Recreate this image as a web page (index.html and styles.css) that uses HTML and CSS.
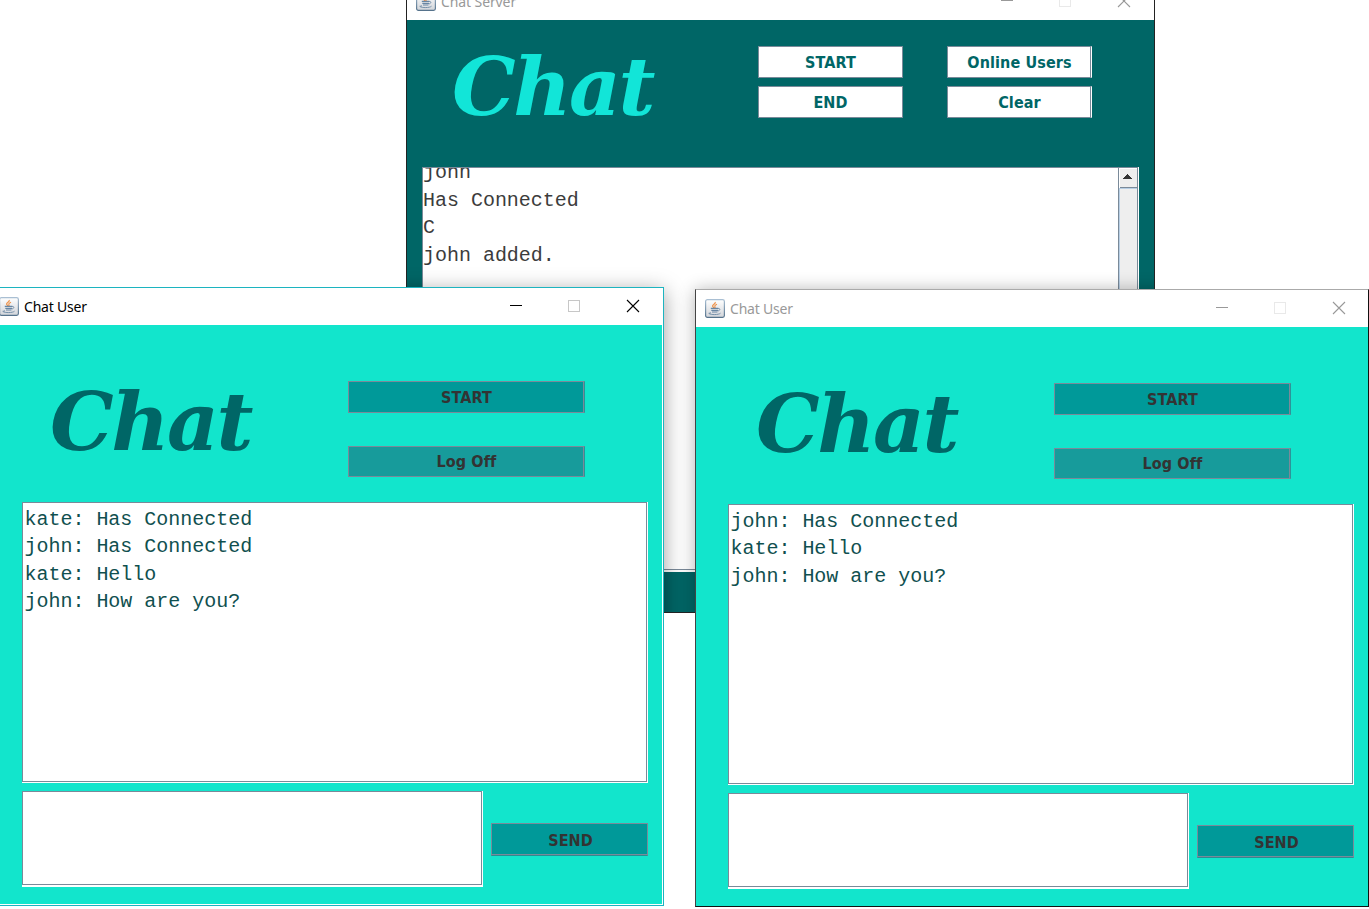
FILE: index.html
```
<!DOCTYPE html>
<html lang="en">
<head>
<meta charset="utf-8">
<title>Chat</title>
<link rel="stylesheet" href="styles.css">
</head>
<body>
<svg width="0" height="0" class="defs">
  <defs>
    <linearGradient id="tile" x1="0" y1="0" x2="0" y2="1"><stop offset="0" stop-color="#fff"/><stop offset="1" stop-color="#d2d5da"/></linearGradient>
    <linearGradient id="edge" x1="0" y1="0" x2="0" y2="1"><stop offset="0" stop-color="#a9bfd3"/><stop offset="1" stop-color="#56738c"/></linearGradient>
    <symbol id="java" viewBox="0 0 20 19">
      <rect x=".6" y=".6" width="18.8" height="17.8" rx="1.8" fill="url(#tile)" stroke="url(#edge)" stroke-width="1.2"/>
      <path d="M10.2 3c1 1.6-2.900 2.500-2.600 4.100.1.700.9 1.100 1.300 1.900M12 5.200c-1.600.7-2.500 1.300-2.100 2.300.3.700.5 1-.2 1.700" fill="none" stroke="#ee9148" stroke-width="1.200"/>
      <path d="M5.800 9.400h7.600M6.300 11.300h6.700M7 13h5.400" fill="none" stroke="#6886a3" stroke-width="1.200"/>
      <path d="M13.200 9.500c2.400-.4 2.200 2.200-.6 2.500M3.800 14.400c2 1.700 10 1.500 11.700-.2M6 13.800l-2.200.6" fill="none" stroke="#7691aa" stroke-width="1"/>
    </symbol>
    <symbol id="controls" viewBox="0 0 131 14">
      <path d="M1 6.500h12" stroke="currentColor"/>
      <rect x="59.500" y="1.500" width="11" height="11" fill="none" stroke="currentColor" opacity=".22"/>
      <path d="M118 1l12 12M130 1l-12 12" stroke="currentColor" stroke-width="1.100"/>
    </symbol>
  </defs>
</svg>

<main class="desktop">
  <section class="window server">
    <header class="titlebar">
      <svg class="java"><use href="#java"/></svg><span class="caption">Chat Server</span>
      <svg class="controls"><use href="#controls"/></svg>
    </header>
    <div class="server-body">
      <div class="server-top">
        <h1 class="logo">Chat</h1>
        <div class="server-buttons">
          <button class="btn light">START</button><button class="btn light edge">Online Users</button>
          <button class="btn light">END</button><button class="btn light edge">Clear</button>
        </div>
      </div>
      <div class="pane server-log">
        <div class="pane-inner">
          <div class="lines"><p>john</p><p>Has Connected</p><p>C</p><p>john added.</p></div>
          <div class="scrollbar"><div class="arrow"><svg width="9" height="5" shape-rendering="crispEdges"><path d="M4 0h1v1h1v1h1v1h1v1h1v1H0V4h1V3h1V2h1V1h1z" fill="#333"/></svg></div></div>
        </div>
      </div>
    </div>
    <div class="shade shade-left"></div>
    <div class="shade shade-right"></div>
  </section>

  <section class="window user active">
    <header class="titlebar">
      <svg class="java"><use href="#java"/></svg><span class="caption">Chat User</span>
      <svg class="controls"><use href="#controls"/></svg>
    </header>
    <div class="user-body">
      <div class="user-top">
        <h1 class="logo">Chat</h1>
        <div class="user-buttons"><button class="btn teal">START</button><button class="btn teal logoff">Log Off</button></div>
      </div>
      <div class="pane log"><div class="pane-inner"><div class="lines"><p>kate: Has Connected</p><p>john: Has Connected</p><p>kate: Hello</p><p>john: How are you?</p></div></div></div>
      <div class="compose"><div class="pane input"><div class="pane-inner"></div></div><button class="btn send">SEND</button></div>
    </div>
  </section>

  <section class="window user inactive">
    <header class="titlebar">
      <svg class="java"><use href="#java"/></svg><span class="caption">Chat User</span>
      <svg class="controls"><use href="#controls"/></svg>
    </header>
    <div class="user-body">
      <div class="user-top">
        <h1 class="logo">Chat</h1>
        <div class="user-buttons"><button class="btn teal">START</button><button class="btn teal logoff">Log Off</button></div>
      </div>
      <div class="pane log"><div class="pane-inner"><div class="lines"><p>john: Has Connected</p><p>kate: Hello</p><p>john: How are you?</p></div></div></div>
      <div class="compose"><div class="pane input"><div class="pane-inner"></div></div><button class="btn send">SEND</button></div>
    </div>
  </section>
</main>
</body>
</html>
```
FILE: styles.css
```
* { box-sizing: border-box; }
body { margin: 0; background: #fff; }
p, h1 { margin: 0; }
.defs { position: absolute; }
.desktop { position: relative; width: 1369px; height: 909px; overflow: hidden; background: #fff; }

.window { position: absolute; display: flex; flex-direction: column; overflow: hidden; }
.server { left: 406px; top: -18px; width: 749px; height: 631px; border: 1px solid #222; }
.active { left: -11px; top: 287px; width: 675px; height: 619px; border: 1px solid #1cb4c0; background: #fff; padding: 0 1px 1px 0; }
.inactive { left: 695px; top: 289px; width: 674px; height: 618px; border: 1px solid #111; border-top-color: #aaa; border-left-color: #444; }

.titlebar { display: flex; align-items: center; flex: none; height: 37px; padding-left: 9px; background: #fff; color: #999; }
.active .titlebar { color: #000; }
.java { width: 20px; height: 19px; margin-right: 5px; }
.caption { flex: 1; font: 14px/20px "Noto Sans", sans-serif; letter-spacing: -.2px; }
.server .caption { letter-spacing: -.1px; }
.controls { width: 131px; height: 14px; margin: 0 23px 1px 0; }
.user .controls { margin-right: 22px; }

.logo { font: italic bold 80px/80px "DejaVu Serif", serif; letter-spacing: -2.4px; white-space: nowrap; }

.server-body { flex: 1; background: #006666; padding: 0 15px 40px; display: flex; flex-direction: column; }
.server-top { display: flex; justify-content: space-between; height: 147px; padding: 26px 47px 0 30px; }
.server .logo { color: #12e5d8; padding-top: 1px; }
.server-buttons { display: grid; grid-template-columns: 145px 145px; grid-template-rows: 32px 32px; gap: 8px 44px; }

.btn { display: flex; align-items: center; justify-content: center; padding: 1px 0 0; border: 1px solid #7a8a99; border-radius: 0; font: bold 16px/20px "DejaVu Sans Condensed", "DejaVu Sans", sans-serif; letter-spacing: .1px; }
.light { background: #fff; color: #006666; }
.edge { box-shadow: inset -1px 0 #7a8a99; border-right-color: #fff; }
.teal, .send { background: #009999; color: #333; border-color: #7a8a99; }
.teal { height: 32px; border-right-color: #2b9499; box-shadow: inset -1px 0 #7a8a99; }
.logoff { height: 31px; padding-top: 0; background: #179b9b; }

.pane { display: flex; background: #fff; padding: 0 1px 1px 0; }
.pane-inner { flex: 1; display: flex; overflow: hidden; border: 1px solid #7a8a99; background: #fff; }
.lines { flex: 1; font: 20px/27.4px "Liberation Mono", monospace; letter-spacing: -.02px; white-space: pre; }

.server-log { height: 405px; padding-bottom: 2px; }
.server-log .lines { color: #3c3c3c; margin-top: -8.6px; }
.scrollbar { width: 19px; border-left: 1px solid #7a8a99; background: #eee; box-shadow: inset 1px 0 #b8cfe5; }
.arrow { display: flex; align-items: center; justify-content: center; height: 21px; border-bottom: 1px solid #b8cfe5; box-shadow: inset 1px 1px #fff, inset 0 -1px #7a8a99; padding: 0 1px 3px 0; }

.shade { position: absolute; pointer-events: none; }
.shade-left { left: -418px; top: 304px; width: 675px; height: 619px; box-shadow: 0 4px 20px rgba(0, 0, 0, .38); }
.shade-right { left: 288px; top: 306px; width: 674px; height: 618px; box-shadow: 0 1px 16px rgba(0, 0, 0, .3); }

.user-body { flex: 1; background: #12e5cc; padding: 0 14px 0 32px; }
.user-top { display: flex; justify-content: space-between; height: 177px; padding: 56px 63px 0 28px; }
.user .logo { color: #006666; padding-top: 1px; }
.user-buttons { display: flex; flex-direction: column; gap: 33px; width: 237px; }
.log { height: 281px; margin-bottom: 8px; }
.user .lines { color: #10504f; padding: 3px 0 0 1.5px; }
.compose { display: flex; justify-content: space-between; align-items: flex-start; }
.input { width: 461px; height: 96px; padding-bottom: 2px; }
.send { width: 157px; height: 33px; margin-top: 32px; padding: 2px 0 0 2px; border-bottom-color: #2b8c93; box-shadow: inset 0 -1px #7a8a99; }
```
